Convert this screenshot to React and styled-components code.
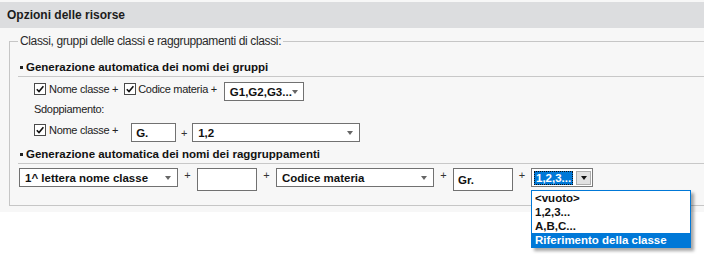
import React from 'react';
import styled, { createGlobalStyle } from 'styled-components';

const GlobalStyle = createGlobalStyle`
  html, body {
    margin: 0;
    padding: 0;
    height: 100%;
    background: #fff;
  }
  body {
    font-family: "Liberation Sans", Arial, sans-serif;
    font-size: 11px;
    color: #222;
  }
  #root {
    min-height: 100%;
    overflow: visible;
  }
`;

function CheckBox() {
  return (
    <Box>
      <svg width="10" height="10" viewBox="0 0 10 10">
        <path d="M1.8 5.2 L4 7.6 L8.4 2.2" fill="none" stroke="#111" strokeWidth="1.6" />
      </svg>
    </Box>
  );
}

function App() {
  return (
    <Page>
      <GlobalStyle />
      <Panel>
        <Header>Opzioni delle risorse</Header>
        <Group>
          <Legend>Classi, gruppi delle classi e raggruppamenti di classi:</Legend>

          <SectionTitle $top={13}>Generazione automatica dei nomi dei gruppi</SectionTitle>
          <Row $top={5} $indent={16}>
            <CheckBox />
            <Label $gap={3}>Nome classe +</Label>
            <Spacer $w={6} />
            <CheckBox />
            <Label $gap={2}>Codice materia +</Label>
            <Select $w={80} $ml={7}>G1,G2,G3...</Select>
          </Row>
          <Note>Sdoppiamento:</Note>
          <Row $top={7} $indent={16}>
            <CheckBox />
            <Label $gap={3}>Nome classe +</Label>
            <TextBox $w={45} $h={19} $ml={13}>G.</TextBox>
            <Plus $w={16} $center>+</Plus>
            <Select $w={168}>1,2</Select>
          </Row>

          <SectionTitle $top={5}>Generazione automatica dei nomi dei raggruppamenti</SectionTitle>
          <Row $top={4} $indent={1}>
            <Select $w={159}>1^ lettera nome classe</Select>
            <Plus $w={19}>+</Plus>
            <TextBox $w={60} $h={23} />
            <Plus $w={19}>+</Plus>
            <Select $w={158}>Codice materia</Select>
            <Plus $w={19}>+</Plus>
            <TextBox $w={60} $h={23}>Gr.</TextBox>
            <Plus $w={18}>+</Plus>
            <Combo>
              <ComboValue>1,2,3...</ComboValue>
              <ComboButton />
              <Menu>
                <MenuItem>&lt;vuoto&gt;</MenuItem>
                <MenuItem>1,2,3...</MenuItem>
                <MenuItem>A,B,C...</MenuItem>
                <MenuItem $active>Riferimento della classe</MenuItem>
              </Menu>
            </Combo>
          </Row>
        </Group>
      </Panel>
    </Page>
  );
}

const Page = styled.div`
  min-height: 254px;
  background: #fff;
`;

const Panel = styled.div`
  background: #f7f7f7;
  padding: 2px 0 6px;
`;

const Header = styled.div`
  height: 26px;
  line-height: 26px;
  padding-left: 7px;
  background: #dcdddf;
  font-size: 12px;
  font-weight: bold;
  color: #1c1c1c;
`;

const Group = styled.div`
  display: flex;
  flex-direction: column;
  margin: 13px 0 0 9px;
  padding: 0 0 14px 8px;
  border: 1px solid #c6c6c6;
  border-right: none;
`;

const Legend = styled.div`
  align-self: flex-start;
  margin: -7px 0 0 0;
  padding: 0 2px;
  line-height: 12px;
  font-size: 12px;
  letter-spacing: -0.37px;
  color: #2a2a2a;
  background: #f7f7f7;
`;

const SectionTitle = styled.div`
  display: flex;
  align-items: center;
  margin-top: ${p => p.$top}px;
  padding: 0 0 2px 2px;
  line-height: 14px;
  border-bottom: 1px solid #c8c8c8;
  font-size: 11.5px;
  font-weight: bold;
  color: #111;

  &::before {
    content: "";
    width: 3px;
    height: 3px;
    margin-right: 3px;
    background: #222;
  }
`;

const Row = styled.div`
  display: flex;
  align-items: flex-start;
  margin-top: ${p => p.$top}px;
  padding-left: ${p => p.$indent}px;
`;

const Box = styled.span`
  flex: none;
  display: inline-flex;
  align-items: center;
  justify-content: center;
  width: 12px;
  height: 12px;
  margin-top: 1px;
  box-sizing: border-box;
  border: 1px solid #4a4a4a;
  background: #fff;
`;

const Label = styled.span`
  margin-left: ${p => p.$gap}px;
  line-height: 14px;
  font-size: 11px;
  letter-spacing: -0.3px;
  white-space: nowrap;
  color: #222;
`;

const Spacer = styled.span`
  flex: none;
  width: ${p => p.$w}px;
`;

const Note = styled.div`
  margin-top: 1px;
  padding-left: 16px;
  line-height: 14px;
  font-size: 11px;
  letter-spacing: -0.3px;
  color: #222;
`;

const Select = styled.div`
  flex: none;
  display: flex;
  align-items: center;
  justify-content: space-between;
  width: ${p => p.$w}px;
  height: 19px;
  margin-left: ${p => p.$ml || 0}px;
  padding: 0 6px 0 5px;
  box-sizing: border-box;
  border: 1px solid #717171;
  background: #fff;
  font-size: 11.5px;
  font-weight: bold;
  color: #111;
  white-space: nowrap;

  &::after {
    content: "";
    border-left: 3.5px solid transparent;
    border-right: 3.5px solid transparent;
    border-top: 4px solid #666;
  }
`;

const TextBox = styled.div`
  flex: none;
  display: flex;
  align-items: center;
  width: ${p => p.$w}px;
  height: ${p => p.$h}px;
  margin-left: ${p => p.$ml || 0}px;
  padding-left: 4px;
  box-sizing: border-box;
  border: 1px solid #717171;
  background: #fff;
  font-size: 11.5px;
  font-weight: bold;
  color: #111;
`;

const Plus = styled.span`
  flex: none;
  align-self: ${p => (p.$center ? 'center' : 'flex-start')};
  width: ${p => p.$w}px;
  line-height: 14px;
  text-align: center;
  font-size: 11px;
  color: #333;
`;

const Combo = styled.div`
  position: relative;
  flex: none;
  display: flex;
  align-items: center;
  gap: 3px;
  width: 62px;
  height: 19px;
  padding: 0 1px 0 2px;
  box-sizing: border-box;
  border: 1px solid #7a7a7a;
  background: #fff;
`;

const ComboValue = styled.span`
  flex: 1;
  height: 14px;
  line-height: 14px;
  padding-left: 2px;
  background: #0078d7;
  outline: 1px dotted #111;
  outline-offset: -1px;
  font-size: 11.5px;
  font-weight: bold;
  color: #fff;
  overflow: hidden;
  white-space: nowrap;
`;

const ComboButton = styled.span`
  flex: none;
  display: flex;
  align-items: center;
  justify-content: center;
  width: 15px;
  height: 14px;
  box-sizing: border-box;
  border: 1px solid #adadad;
  background: #e1e1e1;

  &::after {
    content: "";
    border-left: 3.5px solid transparent;
    border-right: 3.5px solid transparent;
    border-top: 4px solid #111;
  }
`;

const Menu = styled.ul`
  position: absolute;
  top: calc(100% + 4px);
  left: -1px;
  z-index: 2;
  width: 160px;
  margin: 0;
  padding: 0;
  list-style: none;
  box-sizing: border-box;
  border: 1px solid #0078d7;
  background: #fff;
  box-shadow: 3px 3px 3px rgba(0, 0, 0, 0.35);
`;

const MenuItem = styled.li`
  height: 14px;
  line-height: 14px;
  padding-left: 3px;
  font-size: 11.5px;
  font-weight: bold;
  white-space: nowrap;
  color: ${p => (p.$active ? '#fff' : '#111')};
  background: ${p => (p.$active ? '#0078d7' : 'transparent')};
`;

export default App;
